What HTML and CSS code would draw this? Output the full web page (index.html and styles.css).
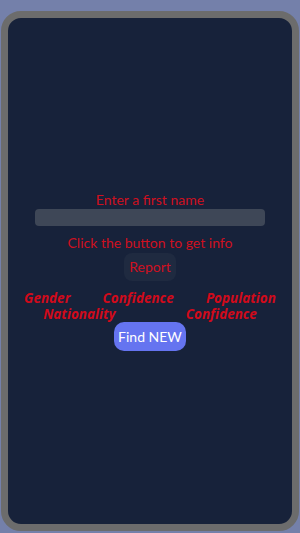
FILE: index.html
```html
<!DOCTYPE html>
<html>
<head>
  <title>Name Info</title>
  <link rel="stylesheet" href="styles.css">
</head>
<body>
  <div class="phone">
    <div class="screen">
      <label class="prompt" for="name">Enter a first name</label>
      <input id="name" class="name-input" type="text">
      <div class="prompt hint">Click the button to get info</div>
      <button class="report">Report</button>
      <div class="info">
        <div class="fields">
          <span>Gender</span>
          <span>Confidence</span>
          <span>Population</span>
        </div>
        <div class="fields">
          <span>Nationality</span>
          <span>Confidence</span>
        </div>
      </div>
      <button class="find">Find NEW</button>
    </div>
  </div>
</body>
</html>
```

FILE: styles.css
```css
body {
  margin: 0;
  height: 533px;
  background: #7480aa;
  font-family: Lato, "Open Sans", sans-serif;
}
.phone {
  margin: 11px 1px 0 1px;
  height: 520px;
  box-sizing: border-box;
  border: 7px solid #6c6c6c;
  border-radius: 20px;
  background: #17223a;
  display: flex;
  flex-direction: column;
}
.screen {
  flex: 1;
  display: flex;
  flex-direction: column;
  align-items: center;
  justify-content: center;
}
.prompt {
  color: #cf1020;
  font-size: 14px;
  line-height: 16px;
}
.name-input {
  width: 230px;
  height: 17px;
  box-sizing: border-box;
  margin-top: 1px;
  border: none;
  border-radius: 4px;
  background: #3e4757;
}
.hint {
  margin-top: 9px;
}
.report {
  margin-top: 2px;
  padding: 0 5px;
  height: 28px;
  border: none;
  border-radius: 8px;
  background: #1f2a40;
  color: #cf1020;
  font-family: inherit;
  font-size: 14px;
}
.info {
  align-self: stretch;
  margin-top: 9px;
}
.fields {
  display: flex;
  justify-content: space-around;
}
.fields span {
  color: #d10a1a;
  font-family: "Open Sans", sans-serif;
  font-size: 13.5px;
  font-weight: bold;
  font-style: italic;
  line-height: 16px;
}
.find {
  height: 29px;
  padding: 0 4px;
  border: none;
  border-radius: 10px;
  background: #6574f0;
  color: #fff;
  font-family: inherit;
  font-size: 14px;
}
```
